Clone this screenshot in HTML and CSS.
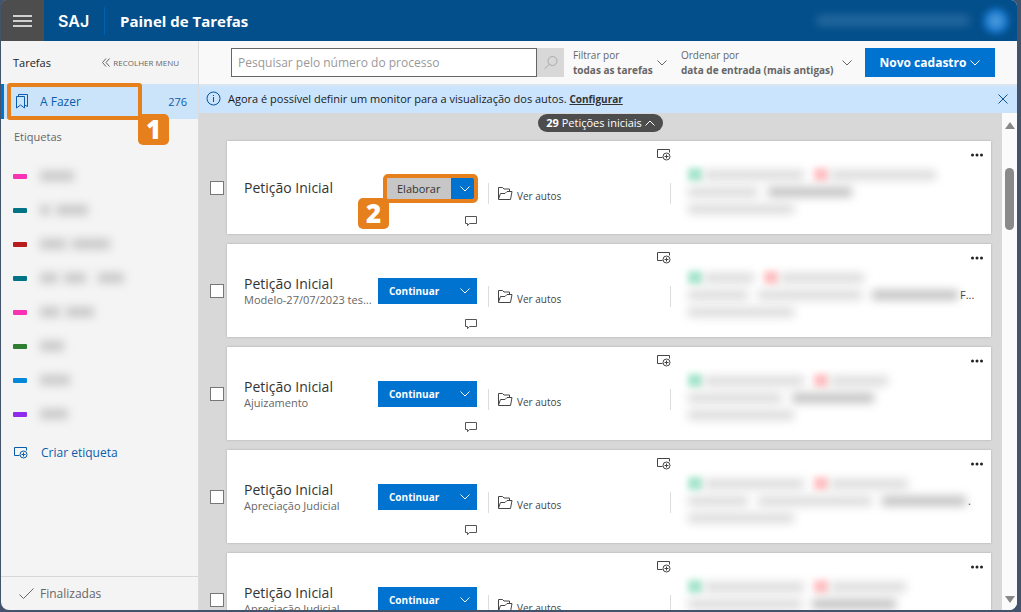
FILE: index.html
```html
<!DOCTYPE html>
<html lang="pt-BR">
<head>
    <meta charset="UTF-8">
    <meta name="viewport" content="width=device-width, initial-scale=1.0">
    <title>SAJ - Painel de Tarefas</title>
    <link rel="stylesheet" href="styles.css">
</head>
<body>
    <svg class="sprite" aria-hidden="true">
        <symbol id="i-chevron" viewBox="0 0 10 6"><path d="M.5 .5L5 5L9.500 .5"/></symbol>
        <symbol id="i-label" viewBox="0 0 14 12"><path d="M5.500 8.500H.5V.5H12.500V3.500"/><circle cx="9.500" cy="7.500" r="3.500"/><path d="M9.500 5.500V9.500M7.500 7.500H11.500"/></symbol>
        <symbol id="i-folder" viewBox="0 0 15 13"><path d="M.5 12.500V.5H4.500L6 2H11.500V4.500M.5 12.500H12.500L14 4.500H9L7 6.500H2.500L.5 12"/></symbol>
        <symbol id="i-comment" viewBox="0 0 12 11"><path d="M.5 .5H11.500V7.500H4.500L2.500 9.700V7.500H.5Z"/></symbol>
        <symbol id="i-dots" viewBox="0 0 12 4"><circle cx="1.500" cy="2" r="1.500"/><circle cx="6" cy="2" r="1.500"/><circle cx="10.500" cy="2" r="1.500"/></symbol>
    </svg>

    <div class="app">
        <header class="topbar">
            <button class="menu-btn" aria-label="Menu"><span></span><span></span><span></span></button>
            <span class="logo">SAJ</span>
            <h1>Painel de Tarefas</h1>
            <div class="user">
                <span class="user-name"></span>
                <span class="avatar"></span>
            </div>
        </header>

        <div class="page">
            <nav class="sidebar">
                <div class="side-head">
                    <span>Tarefas</span>
                    <button class="collapse">
                        <svg width="8" height="9" viewBox="0 0 8 9"><path d="M4 .5L.5 4.500L4 8.500M7.500 .5L4 4.500L7.500 8.500"/></svg>
                        RECOLHER MENU
                    </button>
                </div>
                <a href="#" class="todo">
                    <svg width="12" height="15" viewBox="0 0 12 15"><path d="M.5 2.500H8.500V14L4.500 11L.5 14ZM2.500 2.500V.5H11.500V12.500L8.500 11"/></svg>
                    <span class="todo-name">A Fazer</span>
                    <span>276</span>
                    <span class="mark mark-1"></span>
                    <span class="step step-1">1</span>
                </a>
                <h2>Etiquetas</h2>
                <ul class="tags">
                    <li><b class="pink"></b><i style="width:34px"></i></li>
                    <li><b class="teal"></b><i style="width:10px"></i><i style="width:32px"></i></li>
                    <li><b class="red"></b><i style="width:26px"></i><i style="width:38px"></i></li>
                    <li><b class="teal"></b><i style="width:18px"></i><i style="width:22px"></i><i class="gap" style="width:26px"></i></li>
                    <li><b class="pink"></b><i style="width:20px"></i><i style="width:28px"></i></li>
                    <li><b class="green"></b><i style="width:24px"></i></li>
                    <li><b class="blue"></b><i style="width:30px"></i></li>
                    <li><b class="purple"></b><i style="width:28px"></i></li>
                </ul>
                <a href="#" class="new-tag"><svg width="14" height="12"><use href="#i-label"/></svg>Criar etiqueta</a>
                <a href="#" class="done"><svg width="15" height="12" viewBox="0 0 15 12"><path d="M.5 6.500L4.500 10.500L14.500 .5"/></svg>Finalizadas</a>
            </nav>

            <main>
                <div class="toolbar">
                    <form class="search">
                        <input type="text" aria-label="Pesquisar" placeholder="Pesquisar pelo número do processo">
                        <button type="button" aria-label="Buscar"><svg width="14" height="14" viewBox="0 0 14 14"><circle cx="8.500" cy="5" r="4.500"/><path d="M5.300 8.300L.5 13"/></svg></button>
                    </form>
                    <button class="filter">
                        <span>Filtrar por<strong>todas as tarefas</strong></span>
                        <svg width="10" height="6"><use href="#i-chevron"/></svg>
                    </button>
                    <button class="filter sort">
                        <span>Ordenar por<strong>data de entrada (mais antigas)</strong></span>
                        <svg width="10" height="6"><use href="#i-chevron"/></svg>
                    </button>
                    <button class="new-btn">Novo cadastro<svg width="10" height="6"><use href="#i-chevron"/></svg></button>
                </div>

                <div class="notice">
                    <svg width="15" height="15" viewBox="0 0 15 15"><circle cx="7.500" cy="7.500" r="6.500"/><path d="M7.500 6V11M7.500 4V5"/></svg>
                    <p>Agora é possível definir um monitor para a visualização dos autos. <a href="#">Configurar</a></p>
                    <button aria-label="Fechar"><svg width="10" height="10" viewBox="0 0 10 10"><path d="M.5 .5L9.500 9.500M9.500 .5L.5 9.500"/></svg></button>
                </div>

                <div class="content">
                    <div class="list">
                        <button class="group"><strong>29</strong> Petições iniciais <svg width="10" height="6" viewBox="0 0 10 6"><path d="M.5 5.500L5 1L9.500 5.500"/></svg></button>

                        <div class="row">
                            <input type="checkbox" aria-label="Selecionar tarefa">
                            <article class="card">
                                <div class="name"><h3>Petição Inicial</h3></div>
                                <div class="actions">
                                    <div class="split current">
                                        <button>Elaborar</button>
                                        <button class="more" aria-label="Mais"><svg width="10" height="6"><use href="#i-chevron"/></svg></button>
                                        <span class="step step-2">2</span>
                                    </div>
                                    <button class="comment" aria-label="Comentar"><svg width="12" height="11"><use href="#i-comment"/></svg></button>
                                </div>
                                <div class="middle">
                                    <button aria-label="Etiqueta"><svg width="14" height="12"><use href="#i-label"/></svg></button>
                                    <div class="autos"><a href="#"><svg width="15" height="13"><use href="#i-folder"/></svg>Ver autos</a></div>
                                </div>
                                <div class="details">
                                    <button aria-label="Opções"><svg width="12" height="4"><use href="#i-dots"/></svg></button>
                                    <div class="line"><b class="ok"></b><i style="width:100px"></i><b class="no"></b><i style="width:106px"></i></div>
                                    <div class="line"><i style="width:70px"></i><i class="dark" style="width:84px"></i></div>
                                    <div class="line"><i style="width:106px"></i></div>
                                </div>
                            </article>
                        </div>

                        <div class="row">
                            <input type="checkbox" aria-label="Selecionar tarefa">
                            <article class="card">
                                <div class="name"><h3>Petição Inicial</h3><p>Modelo-27/07/2023 tes...</p></div>
                                <div class="actions">
                                    <div class="split">
                                        <button>Continuar</button>
                                        <button class="more" aria-label="Mais"><svg width="10" height="6"><use href="#i-chevron"/></svg></button>
                                    </div>
                                    <button class="comment" aria-label="Comentar"><svg width="12" height="11"><use href="#i-comment"/></svg></button>
                                </div>
                                <div class="middle">
                                    <button aria-label="Etiqueta"><svg width="14" height="12"><use href="#i-label"/></svg></button>
                                    <div class="autos"><a href="#"><svg width="15" height="13"><use href="#i-folder"/></svg>Ver autos</a></div>
                                </div>
                                <div class="details">
                                    <button aria-label="Opções"><svg width="12" height="4"><use href="#i-dots"/></svg></button>
                                    <div class="line"><b class="ok"></b><i style="width:50px"></i><b class="no"></b><i style="width:84px"></i></div>
                                    <div class="line"><i style="width:60px"></i><i style="width:104px"></i><i class="dark" style="width:86px"></i><span>F...</span></div>
                                    <div class="line"><i style="width:106px"></i></div>
                                </div>
                            </article>
                        </div>

                        <div class="row">
                            <input type="checkbox" aria-label="Selecionar tarefa">
                            <article class="card">
                                <div class="name"><h3>Petição Inicial</h3><p>Ajuizamento</p></div>
                                <div class="actions">
                                    <div class="split">
                                        <button>Continuar</button>
                                        <button class="more" aria-label="Mais"><svg width="10" height="6"><use href="#i-chevron"/></svg></button>
                                    </div>
                                    <button class="comment" aria-label="Comentar"><svg width="12" height="11"><use href="#i-comment"/></svg></button>
                                </div>
                                <div class="middle">
                                    <button aria-label="Etiqueta"><svg width="14" height="12"><use href="#i-label"/></svg></button>
                                    <div class="autos"><a href="#"><svg width="15" height="13"><use href="#i-folder"/></svg>Ver autos</a></div>
                                </div>
                                <div class="details">
                                    <button aria-label="Opções"><svg width="12" height="4"><use href="#i-dots"/></svg></button>
                                    <div class="line"><b class="ok"></b><i style="width:100px"></i><b class="no"></b><i style="width:58px"></i></div>
                                    <div class="line"><i style="width:94px"></i><i class="dark" style="width:82px"></i></div>
                                    <div class="line"><i style="width:106px"></i></div>
                                </div>
                            </article>
                        </div>

                        <div class="row">
                            <input type="checkbox" aria-label="Selecionar tarefa">
                            <article class="card">
                                <div class="name"><h3>Petição Inicial</h3><p>Apreciação Judicial</p></div>
                                <div class="actions">
                                    <div class="split">
                                        <button>Continuar</button>
                                        <button class="more" aria-label="Mais"><svg width="10" height="6"><use href="#i-chevron"/></svg></button>
                                    </div>
                                    <button class="comment" aria-label="Comentar"><svg width="12" height="11"><use href="#i-comment"/></svg></button>
                                </div>
                                <div class="middle">
                                    <button aria-label="Etiqueta"><svg width="14" height="12"><use href="#i-label"/></svg></button>
                                    <div class="autos"><a href="#"><svg width="15" height="13"><use href="#i-folder"/></svg>Ver autos</a></div>
                                </div>
                                <div class="details">
                                    <button aria-label="Opções"><svg width="12" height="4"><use href="#i-dots"/></svg></button>
                                    <div class="line"><b class="ok"></b><i style="width:100px"></i><b class="no"></b><i style="width:78px"></i></div>
                                    <div class="line"><i style="width:60px"></i><i style="width:114px"></i><i class="dark" style="width:84px"></i><span>.</span></div>
                                    <div class="line"><i style="width:106px"></i></div>
                                </div>
                            </article>
                        </div>

                        <div class="row">
                            <input type="checkbox" aria-label="Selecionar tarefa">
                            <article class="card">
                                <div class="name"><h3>Petição Inicial</h3><p>Apreciação Judicial</p></div>
                                <div class="actions">
                                    <div class="split">
                                        <button>Continuar</button>
                                        <button class="more" aria-label="Mais"><svg width="10" height="6"><use href="#i-chevron"/></svg></button>
                                    </div>
                                    <button class="comment" aria-label="Comentar"><svg width="12" height="11"><use href="#i-comment"/></svg></button>
                                </div>
                                <div class="middle">
                                    <button aria-label="Etiqueta"><svg width="14" height="12"><use href="#i-label"/></svg></button>
                                    <div class="autos"><a href="#"><svg width="15" height="13"><use href="#i-folder"/></svg>Ver autos</a></div>
                                </div>
                                <div class="details">
                                    <button aria-label="Opções"><svg width="12" height="4"><use href="#i-dots"/></svg></button>
                                    <div class="line"><b class="ok"></b><i style="width:100px"></i><b class="no"></b><i style="width:76px"></i></div>
                                    <div class="line"><i style="width:114px"></i><i class="dark" style="width:84px"></i></div>
                                    <div class="line"><i style="width:106px"></i></div>
                                </div>
                            </article>
                        </div>
                    </div>
                    <div class="scroll">
                        <span class="arrow up"></span>
                        <span class="thumb"></span>
                        <span class="arrow down"></span>
                    </div>
                </div>
            </main>
        </div>
    </div>
</body>
</html>
```

FILE: styles.css
```css
*{
    margin: 0;
    padding: 0;
    box-sizing: border-box;
}
body{
    height: 100vh;
    padding: 0 4px 2px 1px;
    background-color: #42536b;
    font-family: "Open Sans", "Noto Sans", sans-serif;
    font-size: 11px;
    line-height: 16px;
    color: #444;
    overflow: hidden;
}
a{
    color: inherit;
    text-decoration: none;
}
button{
    display: flex;
    align-items: center;
    border: none;
    background: none;
    font: inherit;
    color: inherit;
    white-space: nowrap;
    cursor: pointer;
}
svg{
    flex: none;
    fill: none;
    stroke: currentColor;
}
.sprite{
    position: absolute;
    width: 0;
    height: 0;
}
#i-dots{
    fill: currentColor;
    stroke: none;
}
.app{
    height: 100%;
    display: flex;
    flex-direction: column;
    border-radius: 6px 6px 8px 8px;
    overflow: hidden;
    background-color: #f4f4f4;
}

/* top bar */
.topbar{
    flex: none;
    height: 41px;
    display: flex;
    align-items: center;
    background-color: #034f8b;
    color: #fff;
}
.menu-btn{
    width: 43px;
    height: 100%;
    flex-direction: column;
    justify-content: center;
    gap: 3px;
    background-color: #4d4d4d;
}
.menu-btn span{
    width: 19px;
    height: 2px;
    background-color: #d0d0d0;
}
.logo{
    width: 61px;
    height: 28px;
    padding-left: 14px;
    border-right: 1px solid #0060ad;
    font: 600 16px/28px Inter, sans-serif;
}
h1{
    margin-left: 15px;
    font-size: 15px;
    font-weight: 700;
}
.user{
    display: flex;
    align-items: center;
    gap: 14px;
    margin-left: auto;
    padding-right: 8px;
}
.user-name{
    width: 152px;
    height: 9px;
    background-color: #4a83b3;
    opacity: .6;
    filter: blur(5px);
}
.avatar{
    width: 26px;
    height: 26px;
    border-radius: 50%;
    background: radial-gradient(#5aa5e2, #0a6cc4 70%);
    filter: blur(3px);
}

.page{
    flex: 1;
    min-height: 0;
    display: flex;
}

/* sidebar */
.sidebar{
    flex: none;
    width: 198px;
    display: flex;
    flex-direction: column;
    border-right: 1px solid #dcdcdc;
}
.side-head{
    height: 43px;
    padding: 0 19px 0 12px;
    display: flex;
    align-items: center;
    justify-content: space-between;
    color: #222;
}
.collapse{
    gap: 3px;
    font-size: 8px;
    color: #666;
}
.todo{
    position: relative;
    height: 35px;
    padding: 0 11px 0 12px;
    display: flex;
    align-items: center;
    border-left: 3px solid #0072d0;
    background-color: #cce4f9;
    color: #0a5cad;
}
.todo-name{
    flex: 1;
    margin-left: 12px;
    font-size: 12px;
}
.mark{
    position: absolute;
    border: 4px solid #e5801c;
    border-radius: 3px;
}
.mark-1{
    left: 3px;
    top: -1px;
    width: 135px;
    height: 37px;
}
.step{
    position: absolute;
    width: 31px;
    height: 31px;
    border-radius: 5px;
    background-color: #e5801c;
    color: #fff;
    font-size: 26px;
    font-weight: 800;
    line-height: 31px;
    text-align: center;
}
.step-1{
    left: 134px;
    top: 30px;
}
.step-2{
    right: 85px;
    top: 20px;
}
h2{
    margin: 10px 0 14px 13px;
    font-size: 11px;
    font-weight: 400;
    color: #666;
}
.tags{
    list-style: none;
    padding-left: 12px;
}
.tags li{
    height: 34px;
    display: flex;
    align-items: center;
    gap: 6px;
}
.tags b{
    width: 14px;
    height: 5px;
    margin-right: 7px;
    border-radius: 1px;
}
.tags i{
    height: 10px;
    background-color: #b4b4b4;
    opacity: .7;
    filter: blur(5px);
}
.tags .gap{
    margin-left: 6px;
}
.pink{ background-color: #fa32b4; }
.teal{ background-color: #007385; }
.red{ background-color: #b81c1c; }
.green{ background-color: #2d7d32; }
.blue{ background-color: #0288d8; }
.purple{ background-color: #902aec; }
.new-tag{
    height: 44px;
    padding-left: 13px;
    display: flex;
    align-items: center;
    gap: 13px;
    font-size: 12px;
    color: #0a5cad;
}
.done{
    height: 34px;
    margin-top: auto;
    padding-left: 18px;
    display: flex;
    align-items: center;
    gap: 6px;
    border-top: 1px solid #d8d8d8;
    font-size: 12px;
    color: #666;
}

/* toolbar */
main{
    flex: 1;
    min-width: 0;
    display: flex;
    flex-direction: column;
}
.toolbar{
    flex: none;
    height: 43px;
    padding: 0 22px 0 32px;
    display: flex;
    align-items: center;
    background-color: #f9f9f9;
    color: #666;
}
.search{
    flex: 1;
    display: flex;
    height: 29px;
}
.search input{
    flex: 1;
    min-width: 0;
    padding: 0 6px;
    border: 1px solid #666;
    background-color: #fff;
    font: 12px "Open Sans", "Noto Sans", sans-serif;
}
.search input::placeholder{
    color: #999;
}
.search button{
    width: 27px;
    justify-content: center;
    background-color: #d8d8d8;
    color: #aaa;
}
.filter{
    justify-content: space-between;
    width: 94px;
    margin-left: 9px;
    font-size: 10px;
    line-height: 15px;
    text-align: left;
}
.filter strong{
    display: block;
}
.sort{
    width: 171px;
    margin-left: 14px;
}
.new-btn{
    width: 130px;
    height: 29px;
    margin-left: 13px;
    justify-content: center;
    gap: 4px;
    background-color: #0072d0;
    color: #fff;
    font-size: 12px;
    font-weight: 700;
}

/* notice */
.notice{
    flex: none;
    height: 29px;
    padding: 0 9px 0 7px;
    display: flex;
    align-items: center;
    gap: 7px;
    background-color: #cae4fe;
    box-shadow: inset 0 4px 3px -2px #dbe5ee;
    color: #1a1a1a;
}
.notice p{
    flex: 1;
}
.notice svg{
    color: #0a5296;
}
.notice a{
    font-size: 10px;
    font-weight: 700;
    color: #333;
    text-decoration: underline;
}

/* task list */
.content{
    flex: 1;
    min-height: 0;
    display: flex;
    background-color: #d8d8d8;
}
.list{
    flex: 1;
    min-width: 0;
    padding: 1px 11px 0;
    overflow: hidden;
}
.group{
    height: 18px;
    margin: 0 auto 9px;
    padding: 0 8px;
    gap: 3px;
    border-radius: 9px;
    background-color: #4d4d4d;
    color: #fff;
}
.row{
    display: flex;
    align-items: center;
    gap: 3px;
    margin-bottom: 10px;
}
.row input{
    flex: none;
    appearance: none;
    width: 14px;
    height: 14px;
    border: 1px solid #777;
    background-color: #fff;
}
.card{
    flex: 1;
    min-width: 0;
    height: 93px;
    padding: 0 8px 0 17px;
    display: flex;
    background-color: #fff;
    box-shadow: 0 0 2px #aaa;
}
.name{
    flex: none;
    width: 134px;
    padding-right: 4px;
    display: flex;
    flex-direction: column;
    justify-content: center;
}
h3{
    font-size: 14px;
    font-weight: 400;
    line-height: 18px;
    color: #333;
}
.name p{
    overflow: hidden;
    white-space: nowrap;
    text-overflow: ellipsis;
    line-height: 14px;
    color: #666;
}
.actions{
    flex: none;
    width: 99px;
    padding-top: 34px;
    display: flex;
    flex-direction: column;
}
.split{
    position: relative;
    height: 26px;
    display: flex;
    background-color: #0072d0;
    color: #fff;
    font-size: 10px;
    font-weight: 700;
}
.split button{
    flex: 1;
    padding-left: 11px;
}
.split .more{
    flex: none;
    width: 25px;
    padding: 0;
    justify-content: center;
}
.current{
    width: 87px;
    height: 21px;
    margin: 3px 3px 2px auto;
    outline: 4px solid #e5801c;
    border-radius: 1px;
    font-size: 11px;
    font-weight: 400;
}
.current button:first-child{
    padding-left: 10px;
    background-color: #c6c6c6;
    color: #333;
}
.current .more{
    width: 23px;
    padding-left: 4px;
}
.comment{
    margin: 15px 0 0 auto;
    color: #555;
}
.middle{
    flex: none;
    width: 183px;
    margin-left: 11px;
    padding-top: 8px;
}
.middle > button{
    margin-left: auto;
}
.autos{
    height: 21px;
    margin-top: 22px;
    padding: 4px 9px 0;
    border: solid #ddd;
    border-width: 0 1px;
}
.autos a{
    display: flex;
    gap: 4px;
    font-size: 10px;
    line-height: 18px;
}
.details{
    flex: 1;
    min-width: 0;
    margin-left: 17px;
    padding-top: 12px;
}
.details button{
    margin: 0 0 9px auto;
    color: #222;
}
.line{
    height: 17px;
    display: flex;
    align-items: center;
    gap: 10px;
}
.line b{
    width: 14px;
    height: 13px;
    margin-right: -8px;
    opacity: .8;
    filter: blur(3px);
}
.line i{
    height: 10px;
    background-color: #c4c4c4;
    opacity: .6;
    filter: blur(5px);
}
.line .dark{
    background-color: #999;
}
.line span{
    margin-left: -8px;
}
.ok{ background-color: #8fdfc0; }
.no{ background-color: #ffb0b4; }

/* scrollbar */
.scroll{
    flex: none;
    width: 15px;
    padding: 9px 0 7px;
    display: flex;
    flex-direction: column;
    align-items: center;
    background-color: #fbfbfb;
}
.arrow{
    border: solid transparent;
    border-width: 0 5px;
}
.up{
    border-bottom: 7px solid #888;
}
.down{
    margin-top: auto;
    border-top: 7px solid #888;
}
.thumb{
    width: 9px;
    height: 62px;
    margin-top: 39px;
    border-radius: 5px;
    background-color: #8a8a8a;
}
```
